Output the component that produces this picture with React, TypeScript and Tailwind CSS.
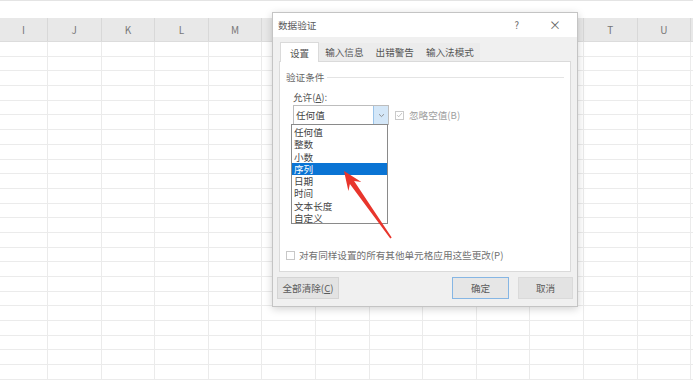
import React from 'react';

const cols = ['I', 'J', 'K', 'L', 'M', 'N', 'O', 'P', 'Q', 'R', 'S', 'T', 'U'];
// columns N..S sit under the dialog, so their letters are not drawn
const hidden = ['N', 'O', 'P', 'Q', 'R', 'S'];
const colWidth = (i: number) => (i === 0 ? 'w-[48px]' : 'w-[53.6px]');
const rows = Array.from({ length: 23 }, (_, i) => i);

const listItems = ['任何值', '整数', '小数', '序列', '日期', '时间', '文本长度', '自定义'];
const tabs = ['设置', '输入信息', '出错警告', '输入法模式'];

const Sheet: React.FC = () => (
  <div className="flex flex-col">
    {/* formula bar edge */}
    <div className="h-[18px] border-t border-[#e4e4e4] bg-white" />
    {/* column header */}
    <div className="flex h-[24px] bg-[#e8e8e8] border-b border-[#dcdcdc]">
      {cols.map((c, i) => (
        <div
          key={c}
          className={`${colWidth(i)} flex-none flex items-center justify-center border-r border-[#d8d8d8] text-[10px] leading-none text-[#777]`}
        >
          {hidden.includes(c) ? null : c}
        </div>
      ))}
    </div>
    {rows.map((r) => (
      <div key={r} className="flex h-[14.7px] border-b border-[#ebebeb]">
        {cols.map((c, i) => (
          <div key={c} className={`${colWidth(i)} flex-none border-r border-[#ebebeb]`} />
        ))}
      </div>
    ))}
  </div>
);

const Dialog: React.FC = () => (
  <div className="absolute left-[272px] top-[12px] w-[306px] h-[295px] flex flex-col border border-[#c4c4c4] bg-[#f0f0f0] shadow-[0_2px_8px_rgba(0,0,0,0.18)] text-[9.6px] leading-[12px] text-[#555]">
    {/* title bar */}
    <div className="h-[24px] flex items-center bg-white pl-[5px] pr-[16px]">
      <span className="text-[#5a5a5a]">数据验证</span>
      <span className="ml-auto mr-[30px] text-[#666]">?</span>
      <span className="text-[12px] leading-none text-[#666]">×</span>
    </div>

    {/* tabs */}
    <div className="flex items-end px-[7px] pt-[4px] h-[24px]">
      {tabs.map((t, i) => (
        <div
          key={t}
          className={
            i === 0
              ? 'h-[20px] px-[9px] flex items-center bg-white border border-b-0 border-[#dadada] -mb-px relative z-10'
              : 'h-[18px] px-[6px] flex items-center bg-[#ececec]'
          }
        >
          {t}
        </div>
      ))}
    </div>

    {/* panel */}
    <div className="relative mx-[6px] h-[211px] flex flex-col bg-white border border-[#dadada] px-[6px] pt-[9px] pb-[10px]">
      <div className="flex items-center gap-[3px] text-[#666]">
        <span>验证条件</span>
        <div className="flex-1 h-px bg-[#e4e4e4]" />
      </div>
      <div className="pl-[7px] mt-[8px]">
        <div>
          允许(<span className="underline">A</span>):
        </div>
        <div className="flex items-center mt-[2px]">
          <div className="w-[96px] h-[20px] flex items-center border border-[#bdbdbd] bg-white">
            <span className="pl-[2px] flex-1 text-[#444]">任何值</span>
            <div className="w-[15px] h-full flex items-center justify-center bg-[#d4e7f8] border-l border-[#9ac4ea]">
              <svg width="7" height="5" viewBox="0 0 7 5">
                <path d="M1 1.2 L3.5 3.6 L6 1.2" fill="none" stroke="#888" strokeWidth="0.9" />
              </svg>
            </div>
          </div>
          <div className="ml-[6px] w-[9px] h-[9px] border border-[#cacaca] flex items-center justify-center">
            <svg width="8" height="8" viewBox="0 0 8 8">
              <path d="M1.3 4.2 L3.1 6 L6.8 1.8" fill="none" stroke="#b0b0b0" strokeWidth="0.9" />
            </svg>
          </div>
          <span className="ml-[5px] text-[#a0a0a0]">忽略空值(B)</span>
        </div>
      </div>

      {/* bottom checkbox */}
      <div className="mt-auto flex items-center gap-[4px] text-[#707070]">
        <div className="w-[9px] h-[9px] border border-[#c8c8c8] bg-white" />
        <span>对有同样设置的所有其他单元格应用这些更改(P)</span>
      </div>

      {/* open dropdown list */}
      <div className="absolute left-[11px] top-[62px] w-[97px] h-[100px] bg-white border border-[#8a8a8a] pt-px leading-[12.3px] text-[#444]">
        {listItems.map((it, i) => (
          <div
            key={it}
            className={`h-[12.3px] pl-[2px] ${i === 3 ? 'bg-[#0a74d4] text-white' : ''}`}
          >
            {it}
          </div>
        ))}
      </div>
    </div>

    {/* buttons */}
    <div className="flex items-center px-[4px] mt-[5px]">
      <div className="w-[62px] h-[22px] flex items-center justify-center bg-[#e3e3e3] border border-[#d4d4d4] text-[#5a5a5a]">
        全部清除(<span className="underline">C</span>)
      </div>
      <div className="ml-auto w-[57px] h-[22px] flex items-center justify-center bg-[#e6e6e6] border border-[#86b6e4] text-[#5a5a5a]">
        确定
      </div>
      <div className="ml-[9px] w-[55px] h-[22px] flex items-center justify-center bg-[#e3e3e3] border border-[#dadada] text-[#5a5a5a]">
        取消
      </div>
    </div>
  </div>
);

const Arrow: React.FC = () => (
  <svg className="absolute inset-0 pointer-events-none" width="693" height="380" viewBox="0 0 693 380">
    <polygon
      points="344,171 361.4,181.9 354.1,180.9 391.7,237.5 390.3,238.5 349.9,183.9 348.4,191.1"
      fill="#e8352c"
    />
  </svg>
);

export default function App() {
  return (
    <div className="relative w-[693px] h-[380px] overflow-hidden bg-white font-['Noto_Sans_CJK_SC','Noto_Sans',sans-serif]">
      <Sheet />
      <Dialog />
      <Arrow />
    </div>
  );
}
